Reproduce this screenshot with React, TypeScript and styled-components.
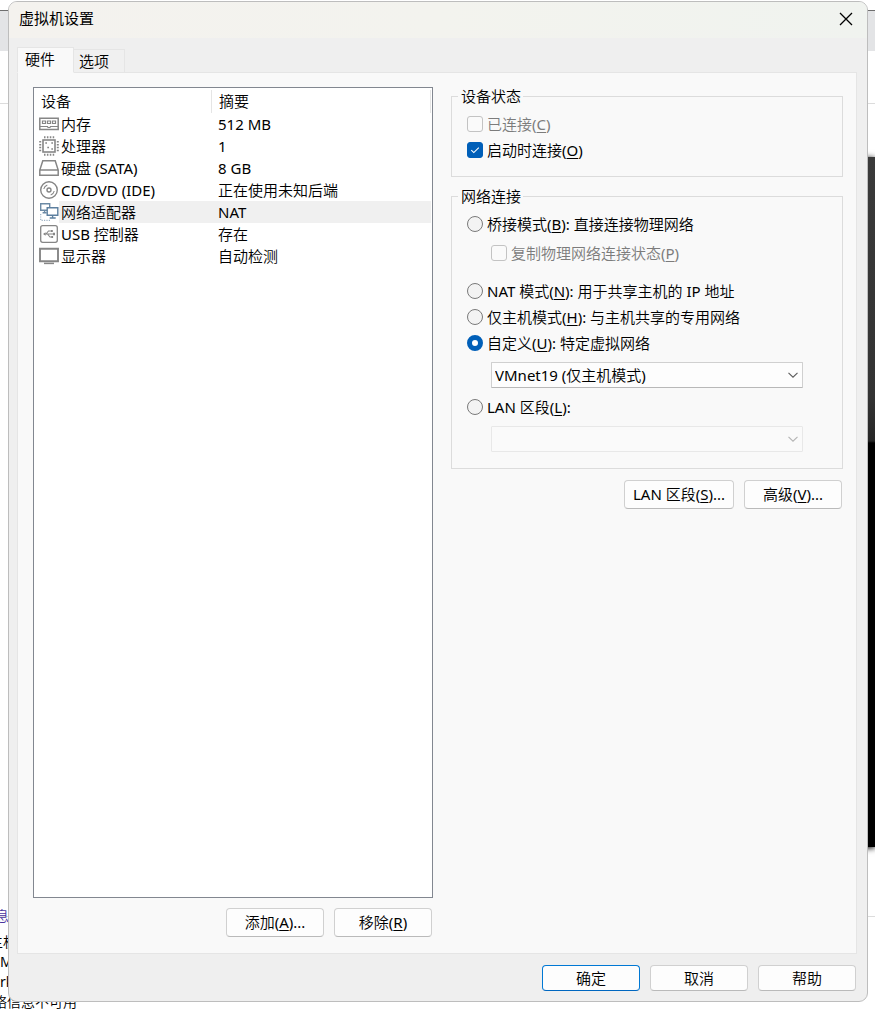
import React, { useState } from "react";
import styled, { createGlobalStyle } from "styled-components";

const uiFont = `"Noto Sans", "Noto Sans CJK SC DemiLight", "Noto Sans CJK SC", sans-serif`;

const GlobalStyle = createGlobalStyle`
  *, *::before, *::after { box-sizing: border-box; }
  body {
    margin: 0;
    background: #fff;
    color: #000;
    font-family: ${uiFont};
    font-size: 15px;
    line-height: 22px;
  }
  button, select, input { font: inherit; color: inherit; margin: 0; }
`;

const Desktop = styled.div`
  position: relative;
  min-height: 100vh;
  padding: 1px 7px 8px 8px;
  display: flex;
  overflow: hidden;
`;

/* Host window that shows round the edges of the dialog */
const HostWindow = styled.div`
  position: absolute;
  inset: 0;
`;

const HostTabs = styled.div`
  height: 10px;
`;

const HostToolbar = styled.div`
  height: 41px;
  background: #e3e4e6;
  border-top: 1px solid #6e6e6e;
`;

const HostHeader = styled.div`
  height: 53px;
  border-bottom: 1px solid #dcdcdc;
`;

const HostConsole = styled.div`
  height: 690px;
  width: 40px;
  margin: 53px 0 0 auto;
  background: linear-gradient(#3a3a3a 0, #333 240px, #262626 284px, #000 286px);
  box-shadow: 0 1px 6px #000;
`;

const HostDetails = styled.div`
  margin-top: 69px;
  border-top: 1px solid #dcdcdc;
  position: relative;
`;

const HostLines = styled.div`
  position: absolute;
  top: -11px;
  left: 0;
  font-size: 14px;
  line-height: 20px;
  white-space: nowrap;
`;

const HostHeading = styled.div`
  margin: 0 0 6px -5px;
  color: #4a35a0;
`;

const HostLine = styled.div<{ $scrolled?: number }>`
  margin-left: -${(p) => p.$scrolled ?? 0}px;
`;

const Dialog = styled.main`
  position: relative;
  flex: 1;
  min-width: 640px;
  display: flex;
  flex-direction: column;
  background: #efefef;
  border: 1px solid #bdbdbd;
  border-radius: 9px;
  overflow: hidden;
`;

const TitleBar = styled.header`
  height: 36px;
  padding: 0 13px 2px 10px;
  display: flex;
  align-items: center;
  justify-content: space-between;
  background: linear-gradient(90deg, #f4f2ee, #f3f3ee 50%, #f0f3ef);
`;

const Title = styled.h1`
  margin: 0 0 2px;
  font-family: "Noto Sans CJK SC", sans-serif;
  font-size: 15px;
  font-weight: 400;
`;

const CloseButton = styled.button`
  width: 16px;
  height: 16px;
  padding: 0;
  border: 0;
  background: none;
  display: grid;
  place-items: center;
`;

const TabList = styled.div`
  display: flex;
  align-items: flex-end;
  margin: 9px 9px 0 8px;
`;

const Tab = styled.button<{ $active?: boolean }>`
  height: ${(p) => (p.$active ? 26 : 24)}px;
  width: ${(p) => (p.$active ? 57 : 51)}px;
  padding: 0 0 ${(p) => (p.$active ? 2 : 0)}px;
  text-align: ${(p) => (p.$active ? "left" : "center")};
  text-indent: ${(p) => (p.$active ? 7 : -10)}px;
  border: 1px solid #e5e5e5;
  border-left-width: ${(p) => (p.$active ? 1 : 0)}px;
  border-bottom-color: ${(p) => (p.$active ? "#f9f9f9" : "#e5e5e5")};
  background: ${(p) => (p.$active ? "#f9f9f9" : "#f0f0f0")};
  margin-bottom: -1px;
  position: relative;
`;

const Panel = styled.section`
  flex: 1;
  margin: 0 10px 0 8px;
  padding: 14px 13px 16px 15px;
  display: grid;
  grid-template-columns: 400fr 392fr;
  column-gap: 18px;
  background: #f9f9f9;
  border: 1px solid #e5e5e5;
`;

const Column = styled.div`
  display: flex;
  flex-direction: column;
  min-width: 0;
`;

const DeviceList = styled.div`
  flex: 1;
  padding-right: 1px;
  background: #fff;
  border: 1px solid #828790;
`;

const DeviceTable = styled.table`
  width: 100%;
  table-layout: fixed;
  border-collapse: collapse;
`;

const HeadCell = styled.th`
  height: 25px;
  padding: 0 7px;
  text-align: left;
  font-weight: 400;
  background: linear-gradient(#e5e5e5, #e5e5e5) right 2px / 1px 100% no-repeat;
`;

const DeviceRow = styled.tr<{ $selected?: boolean }>`
  td + td {
    background: ${(p) => (p.$selected ? "#f0f0f0" : "none")};
  }
`;

const IconCell = styled.td`
  height: 22px;
  padding: 0 0 0 5px;

  svg { display: block; }
`;

const NameCell = styled.td`
  padding: 0 0 0 2px;
  white-space: nowrap;
`;

const SummaryCell = styled.td`
  padding: 0 0 0 6px;
  white-space: nowrap;
`;

const ButtonRow = styled.div<{ $gap: number }>`
  display: flex;
  justify-content: flex-end;
  gap: 10px;
  margin-top: ${(p) => p.$gap}px;
  padding-right: 1px;
`;

const PushButton = styled.button<{ $wide?: boolean; $primary?: boolean; $short?: boolean }>`
  width: ${(p) => (p.$wide ? 110 : 98)}px;
  height: ${(p) => (p.$short ? 26 : 29)}px;
  padding: 0 0 ${(p) => (p.$short ? 0 : 2)}px;
  white-space: nowrap;
  background: #fdfdfd;
  border: 1px solid ${(p) => (p.$primary ? "#0078d4" : "#d0d0d0")};
  border-bottom-color: ${(p) => (p.$primary ? "#0067c0" : "#bababa")};
  border-radius: 4px;
`;

const Group = styled.fieldset`
  min-width: 0;
  margin: 0 0 10px;
  padding: 6px 39px 13px 15px;
  border: 1px solid #dcdcdc;

  &:last-of-type {
    margin-bottom: 0;
    padding-bottom: 16px;
  }
`;

const Legend = styled.legend`
  margin-left: -9px;
  padding: 0 2px 0 3px;
  line-height: 18px;
`;

const Choice = styled.label<{ $disabled?: boolean; $nested?: boolean }>`
  display: flex;
  align-items: center;
  gap: 4px;
  height: 26px;
  margin: ${(p) => (p.$nested ? "3px 0 12px 24px" : "0")};
  white-space: nowrap;
  color: ${(p) => (p.$disabled ? "#7c7c7c" : "#000")};
`;

const CheckInput = styled.input.attrs({ type: "checkbox" })`
  appearance: none;
  flex: none;
  width: 16px;
  height: 16px;
  border: 1px solid #858585;
  border-radius: 3px;
  background: #f5f5f5;

  &:disabled { border-color: #c3c3c3; background: #fafafa; }
`;

const CheckBox = styled.span`
  display: grid;
  > * { grid-area: 1 / 1; }
  > svg { pointer-events: none; display: none; }
  > input:checked { background: #005fb8; border-color: #005fb8; }
  > input:checked + svg { display: block; }
`;

const RadioInput = styled.input.attrs({ type: "radio" })`
  appearance: none;
  flex: none;
  width: 16px;
  height: 16px;
  border: 1px solid #7a7a7a;
  border-radius: 50%;
  background: #f3f3f3;

  &:checked { border: 5px solid #005fb8; background: #fff; }
`;

const SelectBox = styled.div`
  display: grid;
  align-items: center;
  margin: 6px 0 6px 24px;

  &:last-child { margin-bottom: 0; }
  > * { grid-area: 1 / 1; }
  > svg { justify-self: end; margin-right: 4px; pointer-events: none; }
`;

const Select = styled.select`
  appearance: none;
  width: 100%;
  height: 26px;
  padding: 0 20px 0 3px;
  background: #fdfdfd;
  border: 1px solid #d0d0d0;
  border-bottom-color: #b8b8b8;
  border-radius: 1px;

  &:disabled { background: #fafafa; border-color: #e8e8e8; opacity: 1; }
`;

const Footer = styled.footer`
  display: flex;
  justify-content: flex-end;
  gap: 10px;
  padding: 11px 11px 10px;
`;

const Key = styled.u`
  text-decoration-thickness: 1px;
  text-underline-offset: 2px;
`;

/* Label text in which the letter after & is the access key */
function Caption({ text }: { text: string }) {
  const at = text.indexOf("&");
  if (at < 0) return <span>{text}</span>;
  return (
    <span>
      {text.slice(0, at)}
      <Key>{text[at + 1]}</Key>
      {text.slice(at + 2)}
    </span>
  );
}

const Chevron = ({ color }: { color: string }) => (
  <svg width="12" height="8" viewBox="0 0 12 8" fill="none" stroke={color} strokeWidth="1.1">
    <path d="M1.5 1.8 6 6.2l4.5-4.4" />
  </svg>
);

const Icon = ({ children }: { children: React.ReactNode }) => (
  <svg width="20" height="20" viewBox="0 0 20 20" fill="none" stroke="#868686" strokeWidth="1.4">
    {children}
  </svg>
);

const icons: Record<string, React.ReactNode> = {
  memory: (
    <Icon>
      <path d="M.8 4.2h18.4v11.3H.8z" strokeWidth="1.5" />
      <path d="M3.5 7h3v2.5h-3zM8.5 7h3v2.5h-3zM13.5 7h3v2.5h-3z" strokeWidth="1.2" />
      <path d="M1 12.5h7.5l.5 1h2l.5-1H19" strokeWidth="1.2" />
    </Icon>
  ),
  cpu: (
    <Icon>
      <rect x="4" y="4" width="12" height="12" strokeWidth="1.6" />
      <path d="M5 1.2h11M5 18.8h11M1.2 5v11M18.8 5v11" strokeWidth="2" strokeDasharray="1.5 1.4" />
      <path d="M6.3 7H8M12.3 7H14M12.3 13H14M8.3 11.5H10" strokeWidth="1.6" />
    </Icon>
  ),
  disk: (
    <Icon>
      <path d="M3.8 2.7h12.4l3 9.3v5.3H.8V12zM.8 12h18.4" strokeWidth="1.5" />
    </Icon>
  ),
  cd: (
    <Icon>
      <circle cx="10" cy="10" r="8.3" />
      <circle cx="10" cy="10" r="2" />
      <path d="M4.8 9a5.5 5.5 0 0 1 3.5-4.1M15.2 11a5.5 5.5 0 0 1-3.5 4.1" strokeWidth="1.1" />
    </Icon>
  ),
  network: (
    <Icon>
      <path d="M1.7 1.7h9v6.6h-9zM3.6 10.8h4M5.6 8.5v2" stroke="#6c8aa5" />
      <path d="M8.2 5.7h10.6v7.6H8.2z" fill="#fff" stroke="#5c7f9f" />
      <path d="M10.7 16h6M13.6 13.5V16" stroke="#5c7f9f" />
      <path d="M1.7 12v6.3H12" stroke="#9eb2c4" strokeWidth="1.2" strokeDasharray="1.2 1.2" />
    </Icon>
  ),
  usb: (
    <Icon>
      <rect x="1.7" y="1.7" width="16.6" height="16.6" rx="2" strokeWidth="1.3" />
      <path d="M5 10h10M7 10l2.5-3H12M8.5 10l2.5 3h2" strokeWidth="1.1" />
      <path d="m4 10 2.6-1.8v3.6zM14 8.8h2v2.4h-2zM12 6h1.8v2H12zM12.3 12h1.8v2h-1.8z" fill="#868686" stroke="none" />
    </Icon>
  ),
  display: (
    <Icon>
      <path d="M1 2.8h18v12.4H1z" strokeWidth="1.9" />
      <path d="M5 17.4h10" strokeWidth="1.5" />
    </Icon>
  ),
};

const devices = [
  { icon: "memory", name: "内存", summary: "512 MB" },
  { icon: "cpu", name: "处理器", summary: "1" },
  { icon: "disk", name: "硬盘 (SATA)", summary: "8 GB" },
  { icon: "cd", name: "CD/DVD (IDE)", summary: "正在使用未知后端" },
  { icon: "network", name: "网络适配器", summary: "NAT" },
  { icon: "usb", name: "USB 控制器", summary: "存在" },
  { icon: "display", name: "显示器", summary: "自动检测" },
];

interface CheckProps {
  text: string;
  checked?: boolean;
  disabled?: boolean;
  nested?: boolean;
}

function Check({ text, checked, disabled, nested }: CheckProps) {
  return (
    <Choice $disabled={disabled} $nested={nested}>
      <CheckBox>
        <CheckInput defaultChecked={checked} disabled={disabled} />
        <svg width="16" height="16" viewBox="0 0 16 16" fill="none" stroke="#fff" strokeWidth="1.1">
          <path d="m4.3 8.2 2.5 2.4 5-5" />
        </svg>
      </CheckBox>
      <Caption text={text} />
    </Choice>
  );
}

export default function App() {
  const [selected, setSelected] = useState("network");
  const [mode, setMode] = useState("custom");

  const radio = (value: string, text: string) => (
    <Choice>
      <RadioInput name="mode" value={value} checked={mode === value} onChange={() => setMode(value)} />
      <Caption text={text} />
    </Choice>
  );

  return (
    <>
      <GlobalStyle />
      <Desktop>
        <HostWindow aria-hidden="true">
          <HostTabs />
          <HostToolbar />
          <HostHeader />
          <HostConsole />
          <HostDetails>
            <HostLines>
              <HostHeading>息</HostHeading>
              <HostLine $scrolled={11}>主机</HostLine>
              <HostLine>M</HostLine>
              <HostLine>rk</HostLine>
              <HostLine $scrolled={7}>络信息不可用</HostLine>
            </HostLines>
          </HostDetails>
        </HostWindow>

        <Dialog>
          <TitleBar>
            <Title>虚拟机设置</Title>
            <CloseButton aria-label="关闭">
              <svg width="14" height="14" viewBox="0 0 14 14" stroke="#000" strokeWidth="1.3">
                <path d="m1 1 12 12M13 1 1 13" />
              </svg>
            </CloseButton>
          </TitleBar>

          <TabList role="tablist">
            <Tab role="tab" aria-selected="true" $active>硬件</Tab>
            <Tab role="tab" aria-selected="false">选项</Tab>
          </TabList>

          <Panel>
            <Column>
              <DeviceList>
                <DeviceTable>
                  <colgroup>
                    <col width="25" />
                    <col width="153" />
                    <col />
                  </colgroup>
                  <thead>
                    <tr>
                      <HeadCell colSpan={2}>设备</HeadCell>
                      <HeadCell>摘要</HeadCell>
                    </tr>
                  </thead>
                  <tbody>
                    {devices.map((d) => (
                      <DeviceRow key={d.icon} $selected={selected === d.icon} onClick={() => setSelected(d.icon)}>
                        <IconCell>{icons[d.icon]}</IconCell>
                        <NameCell>{d.name}</NameCell>
                        <SummaryCell>{d.summary}</SummaryCell>
                      </DeviceRow>
                    ))}
                  </tbody>
                </DeviceTable>
              </DeviceList>
              <ButtonRow $gap={10}>
                <PushButton><Caption text="添加(&A)..." /></PushButton>
                <PushButton><Caption text="移除(&R)" /></PushButton>
              </ButtonRow>
            </Column>

            <Column>
              <Group>
                <Legend>设备状态</Legend>
                <Check text="已连接(&C)" disabled />
                <Check text="启动时连接(&O)" checked />
              </Group>
              <Group>
                <Legend>网络连接</Legend>
                {radio("bridged", "桥接模式(&B): 直接连接物理网络")}
                <Check text="复制物理网络连接状态(&P)" disabled nested />
                {radio("nat", "NAT 模式(&N): 用于共享主机的 IP 地址")}
                {radio("host", "仅主机模式(&H): 与主机共享的专用网络")}
                {radio("custom", "自定义(&U): 特定虚拟网络")}
                <SelectBox>
                  <Select aria-label="特定虚拟网络">
                    <option>VMnet19 (仅主机模式)</option>
                  </Select>
                  <Chevron color="#5c5c5c" />
                </SelectBox>
                {radio("lan", "LAN 区段(&L):")}
                <SelectBox>
                  <Select aria-label="LAN 区段" disabled />
                  <Chevron color="#b4b4b4" />
                </SelectBox>
              </Group>
              <ButtonRow $gap={11}>
                <PushButton $wide><Caption text="LAN 区段(&S)..." /></PushButton>
                <PushButton><Caption text="高级(&V)..." /></PushButton>
              </ButtonRow>
            </Column>
          </Panel>

          <Footer>
            <PushButton $short $primary>确定</PushButton>
            <PushButton $short>取消</PushButton>
            <PushButton $short>帮助</PushButton>
          </Footer>
        </Dialog>
      </Desktop>
    </>
  );
}
